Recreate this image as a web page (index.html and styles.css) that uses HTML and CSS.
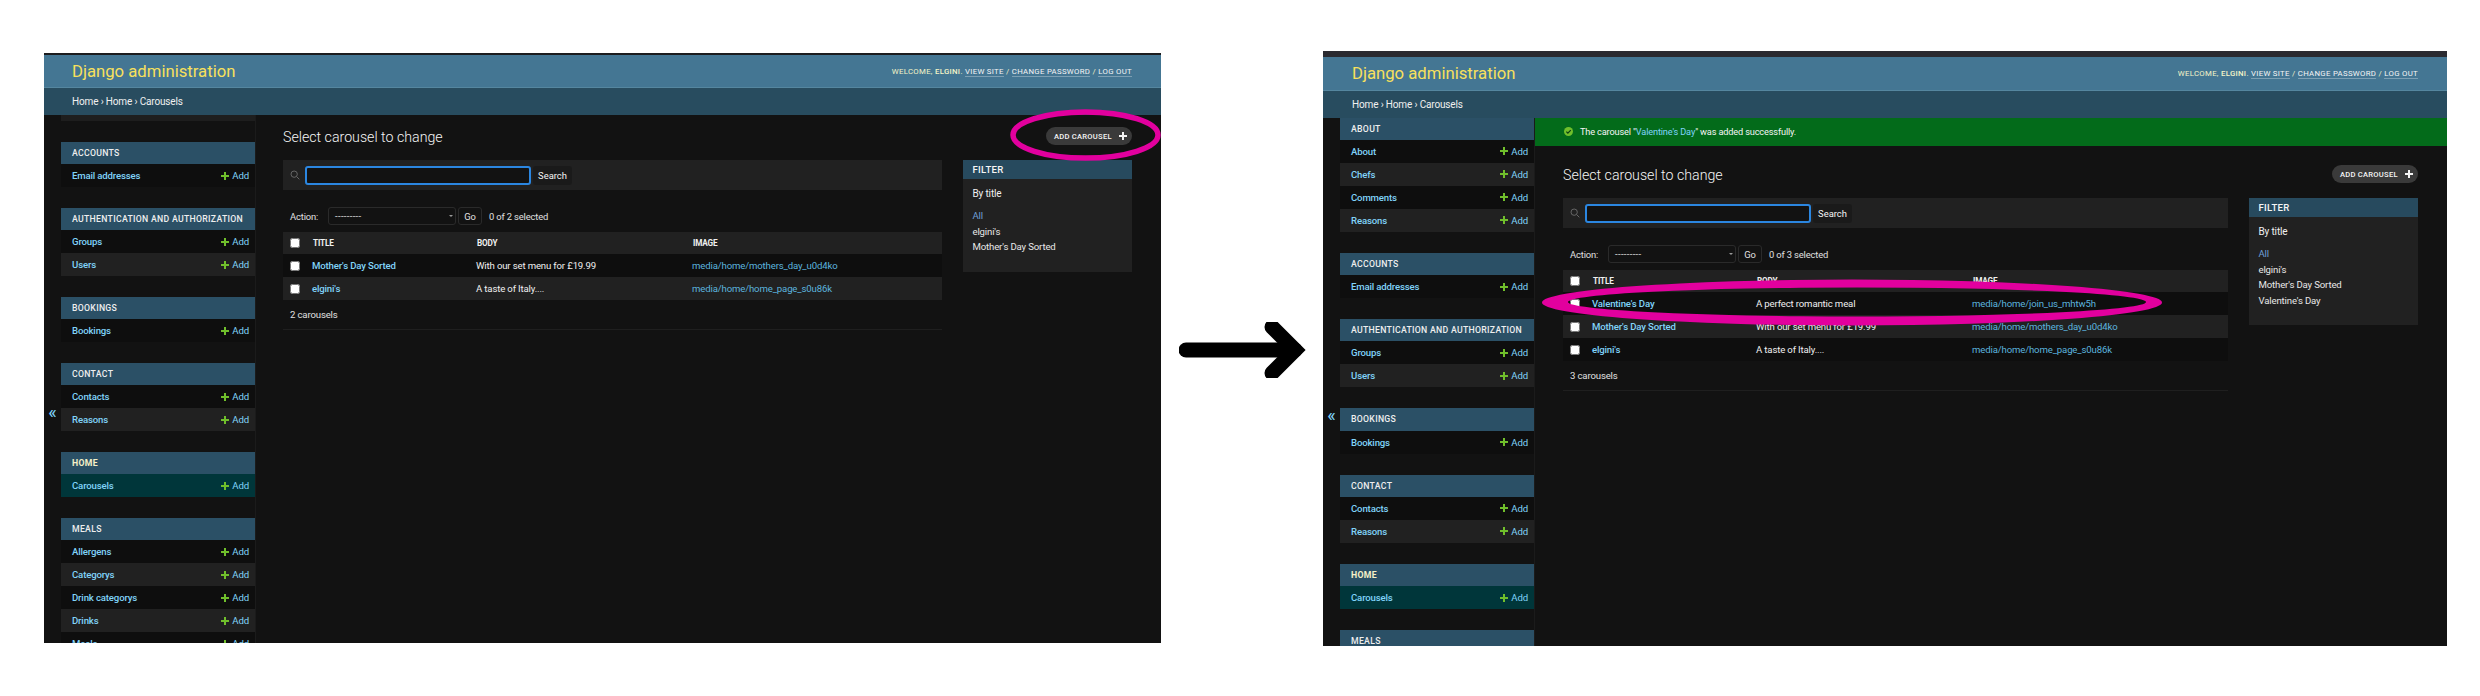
FILE: index.html
```html
<!DOCTYPE html>
<html lang="en">
<head>
    <meta charset="UTF-8">
    <title>Select carousel to change</title>
    <link rel="stylesheet" href="styles.css">
</head>
<body>
    <svg class="defs" width="0" height="0">
        <symbol id="plus" viewBox="0 0 8 8"><path d="M3 0h2v3h3v2H5v3H3V5H0V3h3z"/></symbol>
        <symbol id="lens" viewBox="0 0 12 12"><circle cx="5" cy="5" r="3.8"/><path d="M8 8l3.2 3.2"/></symbol>
    </svg>

    <div class="window window-before">
        <div class="top-strip"></div>
        <div class="header">
            <div class="brand">Django administration</div>
            <div class="user-tools">WELCOME, <strong>ELGINI</strong>. <a>VIEW SITE</a> / <a>CHANGE PASSWORD</a> / <a>LOG OUT</a></div>
        </div>
        <div class="breadcrumbs">Home › Home › Carousels</div>
        <div class="page">
            <div class="toggle">«</div>
            <div class="sidebar">
                <div class="stub"></div>
                <div class="module">
                    <div class="caption">ACCOUNTS</div>
                    <div class="row"><a>Email addresses</a><span class="add"><svg class="plus"><use href="#plus"/></svg>Add</span></div>
                </div>
                <div class="module">
                    <div class="caption">AUTHENTICATION AND AUTHORIZATION</div>
                    <div class="row"><a>Groups</a><span class="add"><svg class="plus"><use href="#plus"/></svg>Add</span></div>
                    <div class="row"><a>Users</a><span class="add"><svg class="plus"><use href="#plus"/></svg>Add</span></div>
                </div>
                <div class="module">
                    <div class="caption">BOOKINGS</div>
                    <div class="row"><a>Bookings</a><span class="add"><svg class="plus"><use href="#plus"/></svg>Add</span></div>
                </div>
                <div class="module">
                    <div class="caption">CONTACT</div>
                    <div class="row"><a>Contacts</a><span class="add"><svg class="plus"><use href="#plus"/></svg>Add</span></div>
                    <div class="row"><a>Reasons</a><span class="add"><svg class="plus"><use href="#plus"/></svg>Add</span></div>
                </div>
                <div class="module">
                    <div class="caption current">HOME</div>
                    <div class="row selected"><a>Carousels</a><span class="add"><svg class="plus"><use href="#plus"/></svg>Add</span></div>
                </div>
                <div class="module">
                    <div class="caption">MEALS</div>
                    <div class="row"><a>Allergens</a><span class="add"><svg class="plus"><use href="#plus"/></svg>Add</span></div>
                    <div class="row"><a>Categorys</a><span class="add"><svg class="plus"><use href="#plus"/></svg>Add</span></div>
                    <div class="row"><a>Drink categorys</a><span class="add"><svg class="plus"><use href="#plus"/></svg>Add</span></div>
                    <div class="row"><a>Drinks</a><span class="add"><svg class="plus"><use href="#plus"/></svg>Add</span></div>
                    <div class="row"><a>Meals</a><span class="add"><svg class="plus"><use href="#plus"/></svg>Add</span></div>
                </div>
            </div>
            <div class="main">
                <div class="content">
                    <div class="title-row">
                        <h1>Select carousel to change</h1>
                        <a class="add-button">ADD CAROUSEL<svg class="plus"><use href="#plus"/></svg></a>
                    </div>
                    <div class="changelist">
                        <div class="results">
                            <div class="toolbar">
                                <svg class="lens"><use href="#lens"/></svg>
                                <input class="search" type="text">
                                <button class="search-btn">Search</button>
                            </div>
                            <div class="actions">
                                <span class="action-label">Action:</span>
                                <span class="select">---------<i></i></span>
                                <button class="go">Go</button>
                                <span>0 of 2 selected</span>
                            </div>
                            <table class="result-table">
                                <thead>
                                    <tr><th><input type="checkbox"></th><th>TITLE</th><th>BODY</th><th>IMAGE</th></tr>
                                </thead>
                                <tbody>
                                    <tr><td><input type="checkbox"></td><td><a class="title-link">Mother's Day Sorted</a></td><td>With our set menu for £19.99</td><td><a>media/home/mothers_day_u0d4ko</a></td></tr>
                                    <tr><td><input type="checkbox"></td><td><a class="title-link">elgini's</a></td><td>A taste of Italy....</td><td><a>media/home/home_page_s0u86k</a></td></tr>
                                </tbody>
                            </table>
                            <div class="paginator">2 carousels</div>
                        </div>
                        <div class="filter">
                            <div class="filter-title">FILTER</div>
                            <div class="filter-by">By title</div>
                            <ul>
                                <li class="active">All</li>
                                <li>elgini's</li>
                                <li>Mother's Day Sorted</li>
                            </ul>
                        </div>
                    </div>
                </div>
            </div>
        </div>
        <svg class="ring ring-add" viewBox="0 0 151 52"><ellipse cx="75.5" cy="26" rx="72.5" ry="23"/></svg>
    </div>

    <svg class="arrow" viewBox="0 0 128 56">
        <path d="M7 28H116"/>
        <path d="M93 5l23 23-23 23"/>
    </svg>

    <div class="window window-after">
        <div class="top-strip"></div>
        <div class="header">
            <div class="brand">Django administration</div>
            <div class="user-tools">WELCOME, <strong>ELGINI</strong>. <a>VIEW SITE</a> / <a>CHANGE PASSWORD</a> / <a>LOG OUT</a></div>
        </div>
        <div class="breadcrumbs">Home › Home › Carousels</div>
        <div class="page">
            <div class="toggle">«</div>
            <div class="sidebar">
                <div class="module">
                    <div class="caption">ABOUT</div>
                    <div class="row"><a>About</a><span class="add"><svg class="plus"><use href="#plus"/></svg>Add</span></div>
                    <div class="row"><a>Chefs</a><span class="add"><svg class="plus"><use href="#plus"/></svg>Add</span></div>
                    <div class="row"><a>Comments</a><span class="add"><svg class="plus"><use href="#plus"/></svg>Add</span></div>
                    <div class="row"><a>Reasons</a><span class="add"><svg class="plus"><use href="#plus"/></svg>Add</span></div>
                </div>
                <div class="module">
                    <div class="caption">ACCOUNTS</div>
                    <div class="row"><a>Email addresses</a><span class="add"><svg class="plus"><use href="#plus"/></svg>Add</span></div>
                </div>
                <div class="module">
                    <div class="caption">AUTHENTICATION AND AUTHORIZATION</div>
                    <div class="row"><a>Groups</a><span class="add"><svg class="plus"><use href="#plus"/></svg>Add</span></div>
                    <div class="row"><a>Users</a><span class="add"><svg class="plus"><use href="#plus"/></svg>Add</span></div>
                </div>
                <div class="module">
                    <div class="caption">BOOKINGS</div>
                    <div class="row"><a>Bookings</a><span class="add"><svg class="plus"><use href="#plus"/></svg>Add</span></div>
                </div>
                <div class="module">
                    <div class="caption">CONTACT</div>
                    <div class="row"><a>Contacts</a><span class="add"><svg class="plus"><use href="#plus"/></svg>Add</span></div>
                    <div class="row"><a>Reasons</a><span class="add"><svg class="plus"><use href="#plus"/></svg>Add</span></div>
                </div>
                <div class="module">
                    <div class="caption current">HOME</div>
                    <div class="row selected"><a>Carousels</a><span class="add"><svg class="plus"><use href="#plus"/></svg>Add</span></div>
                </div>
                <div class="module">
                    <div class="caption">MEALS</div>
                </div>
            </div>
            <div class="main">
                <div class="message">
                    <svg class="check" viewBox="0 0 10 10"><circle cx="5" cy="5" r="5"/><path d="M2.6 5.2l1.7 1.7 3.2-3.4"/></svg>
                    <span>The carousel "<a>Valentine's Day</a>" was added successfully.</span>
                </div>
                <div class="content">
                    <div class="title-row">
                        <h1>Select carousel to change</h1>
                        <a class="add-button">ADD CAROUSEL<svg class="plus"><use href="#plus"/></svg></a>
                    </div>
                    <div class="changelist">
                        <div class="results">
                            <div class="toolbar">
                                <svg class="lens"><use href="#lens"/></svg>
                                <input class="search" type="text">
                                <button class="search-btn">Search</button>
                            </div>
                            <div class="actions">
                                <span class="action-label">Action:</span>
                                <span class="select">---------<i></i></span>
                                <button class="go">Go</button>
                                <span>0 of 3 selected</span>
                            </div>
                            <table class="result-table">
                                <thead>
                                    <tr><th><input type="checkbox"></th><th>TITLE</th><th>BODY</th><th>IMAGE</th></tr>
                                </thead>
                                <tbody>
                                    <tr><td><input type="checkbox"></td><td><a class="title-link">Valentine's Day</a></td><td>A perfect romantic meal</td><td><a>media/home/join_us_mhtw5h</a></td></tr>
                                    <tr><td><input type="checkbox"></td><td><a class="title-link">Mother's Day Sorted</a></td><td>With our set menu for £19.99</td><td><a>media/home/mothers_day_u0d4ko</a></td></tr>
                                    <tr><td><input type="checkbox"></td><td><a class="title-link">elgini's</a></td><td>A taste of Italy....</td><td><a>media/home/home_page_s0u86k</a></td></tr>
                                </tbody>
                            </table>
                            <div class="paginator">3 carousels</div>
                        </div>
                        <div class="filter">
                            <div class="filter-title">FILTER</div>
                            <div class="filter-by">By title</div>
                            <ul>
                                <li class="active">All</li>
                                <li>elgini's</li>
                                <li>Mother's Day Sorted</li>
                                <li>Valentine's Day</li>
                            </ul>
                        </div>
                    </div>
                </div>
            </div>
        </div>
        <svg class="ring ring-row" viewBox="0 0 620 47">
            <path fill-rule="evenodd" d="M0 23.5a310 23 0 1 0 620 0a310 23 0 1 0-620 0zM26 23a289 14.5 0 1 0 578 0a289 14.5 0 1 0-578 0z"/>
        </svg>
    </div>
</body>
</html>
```

FILE: styles.css
```css
* {
    margin: 0;
    padding: 0;
    box-sizing: border-box;
}

html, body {
    height: 696px;
    overflow: hidden;
}

body {
    background-color: white;
    color: #f5f5f5;
    font-family: Roboto, "Liberation Sans", sans-serif;
    font-size: 9.6px;
    letter-spacing: -0.15px;
    display: flex;
    align-items: flex-start;
    padding-left: 44px;
}

.defs {
    position: absolute;
}

/* windows */
.window {
    --cap: 22px;
    --row: 23px;
    --gap: 21px;
    position: relative;
    background-color: #121212;
    overflow: hidden;
    display: flex;
    flex-direction: column;
}

.window-before {
    width: 1117px;
    height: 590px;
    margin-top: 53px;
}

.window-after {
    --cap: 22.1px;
    --row: 23.1px;
    --gap: 21px;
    width: 1124px;
    height: 595px;
    margin-top: 51px;
}

.top-strip {
    height: 2px;
    background-color: #1c1c1e;
    flex-shrink: 0;
}

.window-after .top-strip {
    height: 6px;
    background-color: #2a2a30;
}

.header {
    height: 33px;
    flex-shrink: 0;
    background-color: #447693;
    border-bottom: 1px solid #55869f;
    display: flex;
    justify-content: space-between;
    align-items: center;
    padding: 0 29px 0 28px;
}

.window-after .header {
    height: 33.5px;
    padding-left: 29px;
}

.brand {
    color: #f8e05c;
    font-size: 16.7px;
    font-weight: 400;
    letter-spacing: 0;
}

.user-tools {
    color: #f5f5c8;
    font-size: 7.8px;
    letter-spacing: 0.3px;
    white-space: nowrap;
}

.user-tools strong {
    font-weight: 500;
}

.user-tools a {
    color: #f5f5f5;
    border-bottom: 1px solid rgba(255, 255, 255, 0.3);
}

.breadcrumbs {
    height: 27px;
    flex-shrink: 0;
    background-color: #284c5f;
    color: #f0f0f0;
    font-size: 10px;
    line-height: 27px;
    padding-left: 28px;
}

.window-after .breadcrumbs {
    padding-left: 29px;
}

.page {
    flex: 1;
    display: flex;
    min-height: 0;
}

/* sidebar */
.toggle {
    width: 17px;
    flex-shrink: 0;
    color: #81d4fa;
    font-size: 18px;
    line-height: 15px;
    text-align: center;
    padding-top: 289px;
}

.sidebar {
    width: 195px;
    flex-shrink: 0;
    border-right: 1px solid #1b1b1b;
}

.stub {
    height: 6px;
    background-color: #1e1e1e;
    margin-bottom: var(--gap);
}

.module {
    margin-bottom: var(--gap);
}

.caption {
    height: var(--cap);
    background-color: #2b5066;
    color: #eeeeee;
    font-size: 8.7px;
    font-weight: 500;
    letter-spacing: 0.3px;
    line-height: var(--cap);
    padding-left: 11px;
    white-space: nowrap;
}

.caption.current {
    color: #f5f0c8;
    font-weight: 700;
}

.row {
    height: var(--row);
    background-color: #0e0e0e;
    display: flex;
    justify-content: space-between;
    align-items: center;
    padding: 0 6px 0 11px;
    font-weight: 500;
}

.row:nth-child(odd) {
    background-color: #212121;
}

.row.selected {
    background-color: #00363a;
}

.row a {
    color: #81d4fa;
}

.add {
    color: #81d4fa;
    font-weight: 400;
    display: flex;
    align-items: center;
    gap: 3px;
}

.plus {
    width: 8px;
    height: 8px;
    fill: #70bf2b;
}

/* main column */
.main {
    flex: 1;
    min-width: 0;
}

.message {
    height: 28px;
    background-color: #036b1a;
    color: #f5f5f5;
    display: flex;
    align-items: center;
    gap: 7px;
    padding-left: 29px;
    margin-bottom: 7.5px;
    font-size: 9.2px;
}

.message a {
    color: #81d4fa;
}

.check {
    width: 9px;
    height: 9px;
}

.check circle {
    fill: #70bf2b;
}

.check path {
    fill: none;
    stroke: #0b3d14;
    stroke-width: 1.3;
}

.content {
    padding: 12px 29px 0 27px;
}

.window-after .content {
    padding-left: 28px;
}

.title-row {
    display: flex;
    justify-content: space-between;
    align-items: center;
    height: 18px;
    margin-bottom: 15px;
}

h1 {
    font-size: 14.2px;
    font-weight: 300;
    letter-spacing: 0;
    color: #f5f5f5;
    padding-top: 2px;
}

.add-button {
    width: 86px;
    height: 18px;
    background-color: #3a3a3a;
    border-radius: 9px;
    color: #f5f5f5;
    font-size: 7.6px;
    font-weight: 500;
    letter-spacing: 0.25px;
    display: flex;
    align-items: center;
    justify-content: space-between;
    padding: 0 5px 0 8px;
}

.add-button .plus {
    fill: #f5f5f5;
}

.changelist {
    display: flex;
    gap: 21px;
    align-items: flex-start;
}

.results {
    flex: 1;
    min-width: 0;
}

.toolbar {
    height: 30px;
    background-color: #212121;
    display: flex;
    align-items: center;
    padding: 0 0 0 7px;
}

.lens {
    width: 10px;
    height: 10px;
    fill: none;
    stroke: #666666;
    stroke-width: 1.2;
    margin-right: 5px;
}

.search {
    width: 226px;
    height: 19px;
    background-color: #121212;
    border: 2px solid #2b86e0;
    border-radius: 3px;
}

.search-btn {
    width: 39px;
    height: 19px;
    margin-left: 2px;
    background-color: #1a1a1a;
    border: none;
    border-radius: 3px;
    color: #f5f5f5;
    font-family: inherit;
    font-size: 9.4px;
}

.actions {
    height: 42px;
    display: flex;
    align-items: center;
    padding: 10px 0 0 7px;
    color: #e0e0e0;
    font-size: 9.4px;
}

.action-label {
    width: 38px;
}

.select {
    position: relative;
    width: 128px;
    height: 18px;
    border: 1px solid #2a2a2a;
    border-radius: 3px;
    line-height: 16px;
    padding-left: 6px;
    letter-spacing: 0.35px;
}

.select i {
    position: absolute;
    right: 2px;
    top: 7px;
    border: 2px solid transparent;
    border-top-color: #999999;
}

.go {
    width: 24px;
    height: 18px;
    margin: 0 7px 0 2px;
    background-color: #121212;
    border: 1px solid #2a2a2a;
    border-radius: 3px;
    color: #e0e0e0;
    font-family: inherit;
    font-size: 9.4px;
}

.result-table {
    width: 100%;
    border-collapse: collapse;
    table-layout: fixed;
}

.result-table th {
    height: var(--cap);
    background-color: #212121;
    color: #f0f0f0;
    font-size: 8.2px;
    font-weight: 700;
    text-align: left;
}

.result-table td {
    height: var(--row);
    color: #f0f0f0;
    background-color: #0e0e0e;
}

.result-table tbody tr:nth-child(even) td {
    background-color: #212121;
}

.result-table th:nth-child(1), .result-table td:nth-child(1) {
    width: 29px;
    padding-left: 7px;
}

.result-table th:nth-child(2), .result-table td:nth-child(2) {
    width: 164px;
}

.result-table th:nth-child(3), .result-table td:nth-child(3) {
    width: 216px;
}

.result-table th:nth-child(2), .result-table th:nth-child(3), .result-table th:nth-child(4) {
    padding-left: 1px;
}

.result-table input {
    display: block;
    width: 10px;
    height: 10px;
}

.result-table a {
    color: #5cb4de;
}

.result-table a.title-link {
    color: #81d4fa;
    font-weight: 500;
}

.paginator {
    height: 30px;
    line-height: 30px;
    padding-left: 7px;
    color: #e0e0e0;
    border-bottom: 1px solid #1f1f1f;
}

.filter {
    width: 169.5px;
    flex-shrink: 0;
    background-color: #212121;
    padding-bottom: 17px;
}

.filter-title {
    height: 19px;
    background-color: #274a5e;
    color: #f5f5f5;
    font-size: 9.6px;
    font-weight: 500;
    letter-spacing: 0.3px;
    line-height: 19px;
    padding-left: 10px;
}

.filter-by {
    font-size: 10px;
    color: #f0f0f0;
    padding: 8px 0 5px 10px;
    line-height: 14px;
}

.filter ul {
    list-style: none;
    padding-top: 2px;
}

.filter li {
    height: 15.6px;
    line-height: 15.6px;
    padding-left: 10px;
    color: #e8e8e8;
}

.filter li.active {
    color: #6f9fd8;
}

/* hand drawn markup on top of the screenshots */
.ring {
    position: absolute;
    fill: none;
}

.ring-add {
    left: 966px;
    top: 56px;
    width: 151px;
    height: 52px;
    stroke: #e2009e;
    stroke-width: 5.5;
}

.ring-row {
    left: 219px;
    top: 228px;
    width: 620px;
    height: 47px;
    fill: #e2009e;
}

.arrow {
    width: 128px;
    height: 56px;
    flex-shrink: 0;
    margin: 322px 16px 0 18px;
    fill: none;
    stroke: black;
    stroke-width: 15px;
    stroke-linecap: round;
}
```
